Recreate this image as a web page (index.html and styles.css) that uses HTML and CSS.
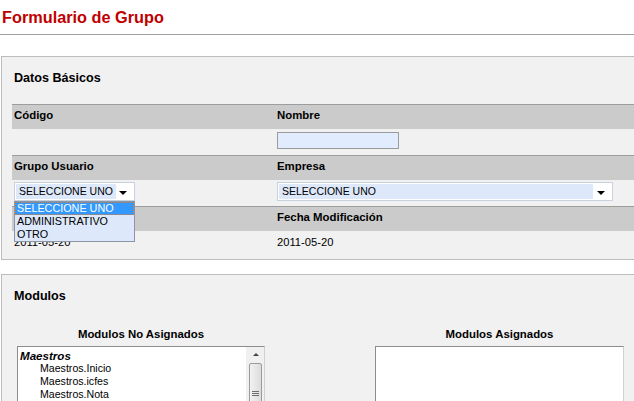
FILE: index.html
```html
<!DOCTYPE html>
<html>
<head>
<meta charset="utf-8">
<link rel="stylesheet" href="styles.css">
</head>
<body>
<h1 class="title">Formulario de Grupo</h1>
<div class="rule"></div>

<div class="panel panel-datos">
  <div class="panel-title">Datos Básicos</div>
  <div class="grid">
    <div class="hdr">Código</div>
    <div class="hdr">Nombre</div>
    <div class="cell"></div>
    <div class="cell"><div class="input"></div></div>
    <div class="hdr">Grupo Usuario</div>
    <div class="hdr">Empresa</div>
    <div class="cell">
      <div class="select select-small"><span class="sel-text">SELECCIONE UNO</span><span class="arrow"></span></div>
    </div>
    <div class="cell">
      <div class="select select-wide"><span class="sel-text">SELECCIONE UNO</span><span class="arrow"></span></div>
    </div>
    <div class="hdr">Fecha Creación</div>
    <div class="hdr">Fecha Modificación</div>
    <div class="cell val">2011-05-20</div>
    <div class="cell val">2011-05-20</div>
  </div>
  <div class="dropdown">
    <div class="opt opt-sel">SELECCIONE UNO</div>
    <div class="opt">ADMINISTRATIVO</div>
    <div class="opt">OTRO</div>
  </div>
</div>

<div class="panel panel-mod">
  <div class="panel-title">Modulos</div>
  <div class="cols">
    <div class="col col-left">
      <div class="col-title">Modulos No Asignados</div>
      <div class="listbox listbox-left">
        <div class="items">
          <div class="group">Maestros</div>
          <div class="item">Maestros.Inicio</div>
          <div class="item">Maestros.icfes</div>
          <div class="item">Maestros.Nota</div>
        </div>
        <div class="scrollbar">
          <div class="sb-up"></div>
          <div class="sb-thumb"><span></span><span></span><span></span></div>
        </div>
      </div>
    </div>
    <div class="col col-mid"></div>
    <div class="col col-right">
      <div class="col-title">Modulos Asignados</div>
      <div class="listbox listbox-right"></div>
    </div>
  </div>
</div>
</body>
</html>
```

FILE: styles.css
```css
html, body {
  margin: 0;
  padding: 0;
  overflow: hidden;
  background: #ffffff;
  font-family: "Liberation Sans", Arial, sans-serif;
  font-size: 12px;
  color: #000;
}

.title {
  margin: 0;
  padding: 8px 0 0 2px;
  height: 26px;
  box-sizing: border-box;
  font-size: 16.3px;
  font-weight: bold;
  line-height: 18px;
  color: #c00000;
}

.rule {
  height: 0;
  border-top: 1px solid #a0a0a0;
  margin-top: 8px;
}

.panel {
  position: relative;
  margin-left: 1px;
  width: 680px;
  background: #f1f1f1;
  border: 1px solid #bdbdbd;
  border-right: none;
  box-sizing: border-box;
}

.panel-datos {
  margin-top: 21px;
  height: 204px;
}

.panel-mod {
  margin-top: 14px;
  height: 140px;
}

.panel-title {
  font-weight: bold;
  font-size: 12.6px;
  line-height: 16px;
  padding: 13px 0 0 12px;
  height: 47px;
  box-sizing: border-box;
}

.grid {
  margin-left: 10px;
  display: grid;
  grid-template-columns: 263px 1fr;
}

.hdr {
  background: #cbcbcb;
  border-top: 1px solid #9d9d9d;
  height: 25px;
  box-sizing: border-box;
  padding: 3px 0 0 2px;
  font-weight: bold;
  font-size: 11.4px;
  line-height: 14px;
}

.cell {
  height: 26px;
  box-sizing: border-box;
  padding: 2px 0 0 2px;
}

.val {
  padding-top: 4px;
  line-height: 14px;
  font-size: 11.2px;
}

.input {
  width: 122px;
  height: 17px;
  box-sizing: border-box;
  border: 1px solid #9b9b9b;
  background: #e1ecfe;
  margin-top: 1px;
}

.select {
  height: 19px;
  box-sizing: border-box;
  background: #ffffff;
  border: 1px solid #c7d2de;
  display: flex;
  align-items: center;
  padding: 1px;
}

.select-small { width: 121px; }
.select-wide { width: 336px; }

.sel-text {
  background: #dde9fb;
  height: 15px;
  line-height: 15px;
  padding-left: 3px;
  font-size: 10.5px;
  white-space: nowrap;
  overflow: hidden;
  box-sizing: border-box;
}

.select-small .sel-text { width: 100px; }
.select-wide .sel-text { width: 314px; }

.arrow {
  margin-left: auto;
  margin-right: 6px;
  width: 0;
  height: 0;
  border-left: 4px solid transparent;
  border-right: 4px solid transparent;
  border-top: 4px solid #000;
  margin-top: 2px;
}

.dropdown {
  position: absolute;
  left: 12px;
  top: 144px;
  width: 121px;
  background: #dde9fb;
  border: 1px solid #8a96a8;
  box-sizing: border-box;
  padding: 0;
}

.opt {
  height: 13px;
  line-height: 13px;
  padding-left: 2px;
  font-size: 10.8px;
  white-space: nowrap;
}

.opt-sel {
  background: #3399ff;
  color: #fff;
  outline: 1px dotted #e07b20;
  outline-offset: -1px;
}

.cols {
  display: flex;
  margin-left: 10px;
}

.col-left { width: 258px; }
.col-mid { width: 105px; }
.col-right { width: 249px; }

.col-title {
  text-align: center;
  font-weight: bold;
  font-size: 11.4px;
  line-height: 14px;
  height: 24px;
  padding-top: 5px;
  box-sizing: border-box;
}

.listbox {
  background: #fff;
  border: 1px solid #8c8c8c;
  border-right-color: #d0d0d0;
  height: 80px;
  box-sizing: border-box;
}

.listbox-left {
  margin-left: 5px;
  width: 248px;
  display: flex;
}

.listbox-right {
  width: 249px;
}

.items {
  flex: 1;
  padding: 2px 0 0 2px;
}

.group {
  font-weight: bold;
  font-style: italic;
  line-height: 13px;
  font-size: 11.6px;
}

.item {
  padding-left: 20px;
  line-height: 13px;
  font-size: 10.6px;
}

.scrollbar {
  width: 17px;
  background: #f0f0f0;
  border-left: 1px solid #f0f0f0;
  display: flex;
  flex-direction: column;
  align-items: center;
}

.sb-up {
  margin-top: 6px;
  width: 0;
  height: 0;
  border-left: 3px solid transparent;
  border-right: 3px solid transparent;
  border-bottom: 3px solid #444;
}

.sb-thumb {
  margin-top: 7px;
  width: 13px;
  height: 60px;
  box-sizing: border-box;
  border: 1px solid #9a9a9a;
  border-radius: 2px;
  background: linear-gradient(to right, #f2f2f2, #dcdcdc);
  display: flex;
  flex-direction: column;
  align-items: center;
  padding-top: 27px;
  gap: 1px;
}

.sb-thumb span {
  display: block;
  width: 7px;
  height: 1px;
  background: #6e6e6e;
}
```
